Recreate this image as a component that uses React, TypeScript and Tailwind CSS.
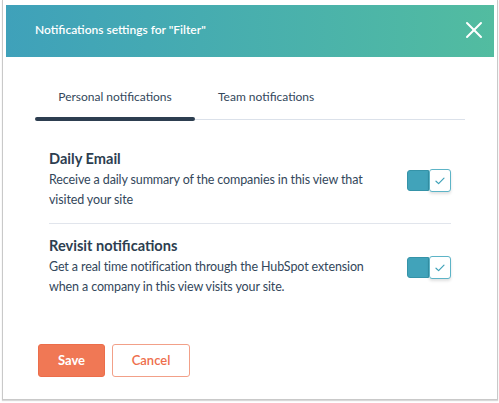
import { X } from "lucide-react";

const font = { fontFamily: "Lato, 'Noto Sans', sans-serif" };

function Toggle() {
  return (
    <div className="mt-[20px] flex h-[23px] w-[44px] shrink-0 items-center">
      <div className="h-[21px] w-[22px] rounded-l-[3px] border border-[#3593a8] bg-[#41a3ba]" />
      <div className="flex h-[23px] w-[22px] items-center justify-center rounded-[3px] border border-[#5db4c7] bg-white shadow-[0_2px_3px_rgba(0,0,0,0.12)]">
        <svg width="10" height="8" viewBox="0 0 10 8" fill="none">
          <path d="M1 4.2 3.6 6.6 9 1.2" stroke="#3ea1b8" strokeWidth="1.2" strokeLinecap="round" strokeLinejoin="round" />
        </svg>
      </div>
    </div>
  );
}

function Setting({ title, children }: { title: string; children: React.ReactNode }) {
  return (
    <div className="flex items-start justify-between">
      <div className="w-[330px]">
        <h3 className="text-[14.6px] leading-[20px] font-bold text-[#2d3e50]">{title}</h3>
        <p className="mt-px text-[12.5px] leading-[20px] tracking-[-0.12px] text-[#33475b]">{children}</p>
      </div>
      <Toggle />
    </div>
  );
}

export default function App() {
  return (
    <div className="h-[403px] w-[499px] bg-white" style={font}>
      <div className="ml-[2px] h-[400px] w-[496px] border-x border-b border-[#c9c9c9] px-[3px] pt-[5px] shadow-[0_1px_1px_rgba(0,0,0,0.15)]">
        <header className="flex h-[52px] items-center justify-between bg-gradient-to-r from-[#3fa1ba] to-[#52bca0] pr-[6px] pb-[2px] pl-[29px]">
          <h2 className="text-[12px] font-semibold text-white">Notifications settings for "Filter"</h2>
          <X className="size-[28px] text-white" strokeWidth={1.7} />
        </header>

        <div className="mx-[29px]">
          <nav className="mt-[22px]">
            <div className="flex">
              <button className="w-[160px] pt-[9px] pb-[11px] text-center text-[12px] leading-[18px] text-[#33475b]">
                Personal notifications
              </button>
              <button className="px-[23px] pt-[9px] pb-[11px] text-[12px] leading-[18px] text-[#33475b]">
                Team notifications
              </button>
            </div>
            <div className="flex items-center">
              <div className="h-[4px] w-[160px] rounded-full bg-[#2d3e50]" />
              <div className="h-px flex-1 bg-[#dbe1ea]" />
            </div>
          </nav>

          <div className="mx-[14px] mt-[28px]">
            <Setting title="Daily Email">
              Receive a daily summary of the companies in this view that visited your site
            </Setting>
            <div className="mt-[13px] mb-[12px] h-px bg-[#e1e5ec]" />
            <Setting title="Revisit notifications">
              Get a real time notification through the HubSpot extension when a company in this view visits your site.
            </Setting>
          </div>

          <div className="mt-[47px] ml-[3px] flex gap-[7px]">
            <button className="h-[33px] w-[67px] rounded-[3px] border border-[#ec6d4a] bg-[#f07855] text-[13px] font-bold text-white">
              Save
            </button>
            <button className="h-[33px] w-[78px] rounded-[3px] border border-[#f2a088] bg-white text-[13px] font-semibold text-[#ee6e4c]">
              Cancel
            </button>
          </div>
        </div>
      </div>
    </div>
  );
}
